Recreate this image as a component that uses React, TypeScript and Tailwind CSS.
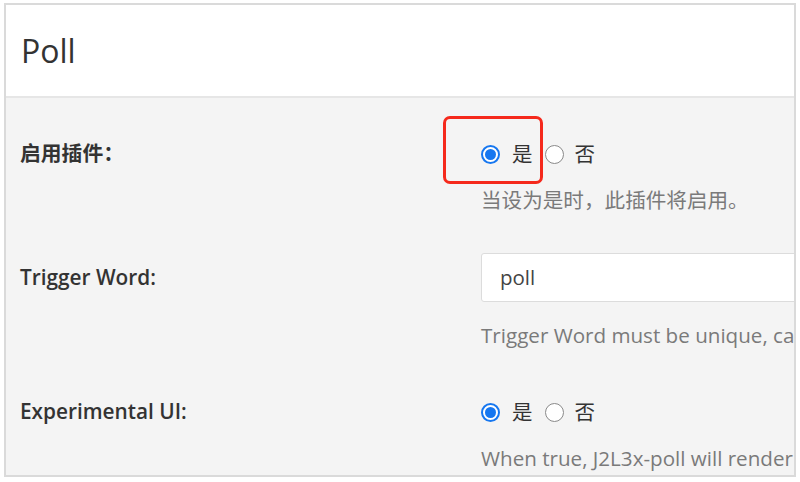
import React from 'react'

const font = { fontFamily: '"Open Sans", "Noto Sans CJK SC", sans-serif' }

function Radio({ checked }: { checked?: boolean }) {
  if (checked) {
    return (
      <span className="flex h-[19px] w-[19px] shrink-0 items-center justify-center rounded-full border-[2.5px] border-[#1677f0] bg-white">
        <span className="block h-[11px] w-[11px] rounded-full bg-[#1677f0]" />
      </span>
    )
  }
  return <span className="block h-[19px] w-[19px] shrink-0 rounded-full border-[1.5px] border-[#8a8a8a] bg-white" />
}

function YesNo({ highlight }: { highlight?: boolean }) {
  return (
    <div className="relative flex h-[26px] items-center">
      {highlight && (
        <div className="absolute left-[-38px] top-[-25px] h-[68px] w-[100px] rounded-[7px] border-[3px] border-[#f5291c]" />
      )}
      <Radio checked />
      <span className="ml-[12px] text-[20.5px] text-[#333]">是</span>
      <span className="ml-[12px] flex">
        <Radio />
      </span>
      <span className="ml-[11px] text-[20.5px] text-[#333]">否</span>
    </div>
  )
}

function Row({
  label,
  children,
  help,
  top,
  lineH,
}: {
  label: string
  children: React.ReactNode
  help: string
  top: string
  lineH: string
}) {
  return (
    <div className={`flex ${top}`}>
      <div className={`flex w-[475px] shrink-0 items-center pl-[14px] text-[20.8px] font-semibold text-[#333] ${lineH}`}>
        {label}
      </div>
      <div className="min-w-0 flex-1">
        {children}
        <p className="mt-[19px] whitespace-nowrap text-[20.6px] leading-[28px] text-[#7a7a7a]">{help}</p>
      </div>
    </div>
  )
}

export default function App() {
  return (
    <div className="h-[482px] bg-white pl-[4px] pr-[4px] pt-[3px]" style={font}>
      <div className="h-[474px] overflow-hidden border-2 border-[#dadada] bg-[#f4f4f4]">
        <div className="flex h-[93px] items-center border-b-2 border-[#e6e6e6] bg-white pl-[15px]">
          <h1 className="text-[32px] font-normal text-[#333]">Poll</h1>
        </div>

        <Row label="启用插件：" top="pt-[43px]" lineH="h-[26px]" help="当设为是时，此插件将启用。">
          <YesNo highlight />
        </Row>

        <Row
          label="Trigger Word:"
          top="pt-[39px]"
          lineH="h-[49px]"
          help="Trigger Word must be unique, cannot be used by other plugins."
        >
          <div className="flex h-[49px] w-[400px] items-center rounded-[3px] border border-[#dcdcdc] bg-white pl-[18px] text-[20.5px] text-[#444]">
            poll
          </div>
        </Row>

        <Row
          label="Experimental UI:"
          top="pt-[50px]"
          lineH="h-[26px]"
          help="When true, J2L3x-poll will render polls with the experimental UI."
        >
          <YesNo />
        </Row>
      </div>
    </div>
  )
}
